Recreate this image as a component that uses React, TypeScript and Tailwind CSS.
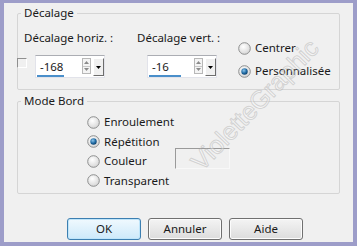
import React from 'react';

function Radio({ checked, label }: { checked?: boolean; label: string }) {
  return (
    <div className="flex items-center h-[16px] gap-[4px]">
      <svg width="13" height="13" viewBox="0 0 13 13" className="shrink-0">
        <defs>
          <radialGradient id="rb" cx="40%" cy="35%" r="70%">
            <stop offset="0%" stopColor="#ffffff" />
            <stop offset="100%" stopColor="#d4d4d4" />
          </radialGradient>
          <radialGradient id="rd" cx="40%" cy="35%" r="70%">
            <stop offset="0%" stopColor="#8cc4ea" />
            <stop offset="60%" stopColor="#1f6aa3" />
            <stop offset="100%" stopColor="#0d3b63" />
          </radialGradient>
        </defs>
        <circle cx="6.5" cy="6.5" r="5.8" fill="url(#rb)" stroke="#8e8f8f" strokeWidth="1" />
        {checked && <circle cx="6.5" cy="6.5" r="3.2" fill="url(#rd)" />}
      </svg>
      <span className="leading-[16px]">{label}</span>
    </div>
  );
}

function SpinInput({ value, line }: { value: string; line: string }) {
  return (
    <div className="relative flex w-[70px] h-[23px] bg-white border border-[#e2e3ea] border-t-[#abadb3]">
      <span className="flex-1 pl-[4px] self-center leading-[16px]">{value}</span>
      <div className="mt-[2px] w-[9px] h-[16px] flex flex-col border border-[#b8b8b8] bg-[#f4f4f4]">
        <div className="flex-1 flex items-center justify-center border-b border-[#c8c8c8]">
          <svg width="5" height="3" viewBox="0 0 5 3"><path d="M0 3 L2.5 0 L5 3 Z" fill="#8a8a8a" /></svg>
        </div>
        <div className="flex-1 flex items-center justify-center">
          <svg width="5" height="3" viewBox="0 0 5 3"><path d="M0 0 L2.5 3 L5 0 Z" fill="#8a8a8a" /></svg>
        </div>
      </div>
      <div className="ml-[2px] mt-[2px] w-[11px] h-[18px] flex items-center justify-center bg-[#f0f0f0] border border-white border-r-[#6d6d6d] border-b-[#6d6d6d]">
        <svg width="5" height="3" viewBox="0 0 5 3"><path d="M0 0 L2.5 3 L5 0 Z" fill="#000" /></svg>
      </div>
      <div className={`absolute bottom-0 left-[1px] h-[2px] bg-[#4a8fca] ${line}`} />
    </div>
  );
}

function Button({ label, primary }: { label: string; primary?: boolean }) {
  return (
    <div
      className={
        primary
          ? 'w-[74px] h-[22px] flex items-center justify-center rounded-[3px] border border-[#3c7fb1] bg-gradient-to-b from-[#f0f9fe] to-[#cde9fa] shadow-[inset_0_0_0_1px_#bfe5fa]'
          : 'w-[74px] h-[22px] flex items-center justify-center rounded-[3px] border border-[#707070] bg-gradient-to-b from-[#f4f4f4] to-[#dcdcdc] shadow-[inset_0_0_0_1px_#fcfcfc]'
      }
    >
      {label}
    </div>
  );
}

export default function App() {
  return (
    <div className="w-[357px] h-[246px] bg-[#9d9dc9] pt-[3px] pl-[4px] pr-[4px] pb-[4px]">
      <div className="relative h-full bg-[#f0f0f0] font-['Noto_Sans',sans-serif] text-[11.5px] text-[#1a1a1a] overflow-hidden">
        {/* Décalage */}
        <div className="relative ml-[13px] mt-[10px] w-[323px] h-[77px] border border-[#d5d5d5] rounded-[2px]">
          <span className="absolute -top-[9px] left-[3px] px-[3px] bg-[#f0f0f0] leading-[16px]">Décalage</span>
          <div className="flex pl-[6px]">
            <div className="w-[113px] pt-[16px] flex flex-col">
              <span className="leading-[16px]">Décalage horiz. :</span>
              <div className="flex mt-[9px] -ml-[7px]">
                <div className="mt-[3px] w-[10px] h-[10px] border border-white border-t-[#8f8f8f] border-l-[#8f8f8f]" />
                <div className="ml-[8px]">
                  <SpinInput value="-168" line="w-[27px]" />
                </div>
              </div>
            </div>
            <div className="w-[101px] pt-[16px] flex flex-col">
              <span className="leading-[16px]">Décalage vert. :</span>
              <div className="mt-[9px] ml-[10px]">
                <SpinInput value="-16" line="w-[32px]" />
              </div>
            </div>
            <div className="pt-[26px] flex flex-col gap-[7px]">
              <Radio label="Centrer" />
              <Radio label="Personnalisée" checked />
            </div>
          </div>
        </div>

        {/* Mode Bord */}
        <div className="relative ml-[13px] mt-[11px] w-[323px] h-[93px] border border-[#d5d5d5] rounded-[2px]">
          <span className="absolute -top-[9px] left-[3px] px-[3px] bg-[#f0f0f0] leading-[16px]">Mode Bord</span>
          <div className="pl-[69px] pt-[12px] flex flex-col gap-[3.5px]">
            <Radio label="Enroulement" />
            <Radio label="Répétition" checked />
            <div className="flex items-start">
              <div className="w-[88px]">
                <Radio label="Couleur" />
              </div>
              <div className="-mt-[5px] -mb-[5px] w-[55px] h-[21px] border border-[#f8f8f8] border-t-[#9a9a9a] border-l-[#9a9a9a]" />
            </div>
            <Radio label="Transparent" />
          </div>
        </div>

        {/* Buttons */}
        <div className="flex gap-[7px] ml-[63px] mt-[24px]">
          <Button label="OK" primary />
          <Button label="Annuler" />
          <Button label="Aide" />
        </div>

        {/* Watermark */}
        <div className="pointer-events-none absolute left-[251px] top-[102px] -translate-x-1/2 -translate-y-1/2 -rotate-[46deg] whitespace-nowrap font-['Liberation_Sans',sans-serif] text-[25px] text-white/40 [-webkit-text-stroke:1px_rgba(160,160,160,0.4)]">
          VioletteGraphic
        </div>
      </div>
    </div>
  );
}
